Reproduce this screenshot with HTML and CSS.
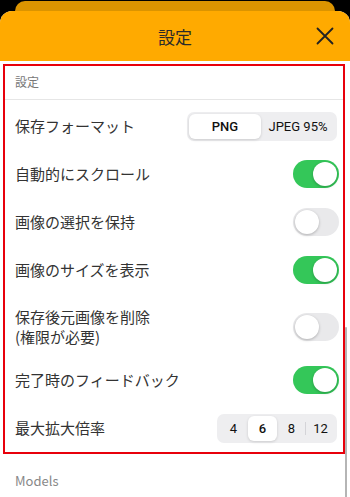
FILE: index.html
```html
<!DOCTYPE html>
<html lang="ja">
<head>
<meta charset="utf-8">
<link rel="stylesheet" href="styles.css">
</head>
<body>
<div class="screen">
  <div class="backcard"></div>
  <div class="sheet">
    <header class="header">
      <div class="title">設定</div>
      <button class="close" aria-label="閉じる">
        <svg width="18" height="18" viewBox="0 0 18 18"><path d="M1.5 1.5 L16.5 16.5 M16.5 1.5 L1.5 16.5" stroke="#222" stroke-width="1.8" stroke-linecap="round" fill="none"/></svg>
      </button>
    </header>
    <div class="content">
      <section class="highlight">
        <div class="section-title">設定</div>
        <div class="rows">
          <div class="row">
            <span class="label">保存フォーマット</span>
            <div class="seg seg-format">
              <span class="seg-item active">PNG</span>
              <span class="seg-item">JPEG 95%</span>
            </div>
          </div>
          <div class="row">
            <span class="label">自動的にスクロール</span>
            <span class="toggle on"><span class="knob"></span></span>
          </div>
          <div class="row">
            <span class="label">画像の選択を保持</span>
            <span class="toggle"><span class="knob"></span></span>
          </div>
          <div class="row">
            <span class="label">画像のサイズを表示</span>
            <span class="toggle on"><span class="knob"></span></span>
          </div>
          <div class="row tall">
            <span class="label">保存後元画像を削除<br>(権限が必要)</span>
            <span class="toggle"><span class="knob"></span></span>
          </div>
          <div class="row">
            <span class="label">完了時のフィードバック</span>
            <span class="toggle on"><span class="knob"></span></span>
          </div>
          <div class="row">
            <span class="label">最大拡大倍率</span>
            <div class="seg seg-zoom">
              <span class="seg-item">4</span>
              <span class="seg-item active">6</span>
              <span class="seg-item div">8</span>
              <span class="seg-item">12</span>
            </div>
          </div>
        </div>
      </section>
      <div class="section-title models">Models</div>
      <div class="scrollbar"></div>
    </div>
  </div>
</div>
</body>
</html>
```
FILE: styles.css
```css
* { box-sizing: border-box; }
html, body { margin: 0; padding: 0; }
body {
  background: #000;
  font-family: "Noto Sans CJK JP", "Noto Sans", sans-serif;
  color: #333;
  width: 350px;
  height: 497px;
  overflow: hidden;
}
.screen { position: relative; width: 350px; height: 497px; }
.backcard {
  margin: 1px 15px 0 15px;
  height: 20px;
  background: #DB9400;
  border-radius: 10px 10px 0 0;
}
.sheet {
  position: absolute;
  top: 10px; left: 0; right: 0; bottom: 0;
  background: #fff;
  border-radius: 12px 12px 0 0;
  overflow: hidden;
}
.header {
  height: 50px;
  background: #FFAA00;
  display: flex;
  align-items: center;
  justify-content: center;
  position: relative;
}
.title { font-size: 17px; color: #2a2a2a; line-height: 1; }
.close {
  position: absolute;
  right: 16px; top: 16px;
  width: 18px; height: 18px;
  padding: 0; border: 0; background: none;
  display: flex;
}
.content { position: relative; height: 437px; }
.highlight {
  margin: 3px 5px 0 3px;
  border: 2px solid #E8000B;
  padding: 0 4px 0 0;
}
.section-title {
  font-size: 12px;
  color: #777;
  height: 34px;
  line-height: 32px;
  padding-left: 10px;
  border-bottom: 1px solid #e6e6e6;
  margin-right: -4px;
}
.rows { padding-top: 2px; }
.row {
  height: 48px;
  display: flex;
  align-items: center;
  justify-content: space-between;
  padding-left: 10px;
}
.row.tall { height: 62px; padding-top: 3px; }
.label { font-size: 15px; line-height: 20px; color: #333; }
.toggle {
  width: 46px; height: 28px;
  border-radius: 14px;
  background: #e9e9eb;
  position: relative;
  display: block;
}
.toggle .knob {
  position: absolute;
  top: 2px; left: 2px;
  width: 24px; height: 24px;
  border-radius: 50%;
  background: #fff;
  box-shadow: 0 1px 3px rgba(0,0,0,0.25);
}
.toggle.on { background: #34C759; }
.toggle.on .knob { left: 20px; }
.seg {
  display: flex;
  background: #eeeef0;
  border-radius: 7px;
  padding: 2px;
  height: 29px;
  margin-right: 2px;
}
.seg-item {
  display: flex;
  align-items: center;
  justify-content: center;
  font-family: "Roboto", "Noto Sans", sans-serif;
  font-size: 13px;
  color: #111;
  border-radius: 6px;
}
.seg-item.active {
  background: #fff;
  font-weight: 500;
  box-shadow: 0 1px 3px rgba(0,0,0,0.15);
}
.seg-format { width: 150px; }
.seg-format .seg-item { flex: 1; }
.seg-format .seg-item.active { flex: 0 0 72px; }
.seg-zoom { width: 120px; }
.seg-zoom .seg-item { flex: 1; position: relative; font-size: 13px; }
.seg-zoom .seg-item.div::after {
  content: "";
  position: absolute;
  right: 0; top: 6px; bottom: 6px;
  width: 1px;
  background: #d4d4d8;
}
.models {
  border-bottom: 0;
  margin: 0;
  padding-left: 15px;
  padding-top: 10px;
  height: 44px;
  line-height: 34px;
  font-size: 13px;
  color: #888;
}
.scrollbar {
  position: absolute;
  right: 3px; top: 263px;
  width: 2px; height: 200px;
  background: #b5b5b5;
  border-radius: 1px;
}
```
